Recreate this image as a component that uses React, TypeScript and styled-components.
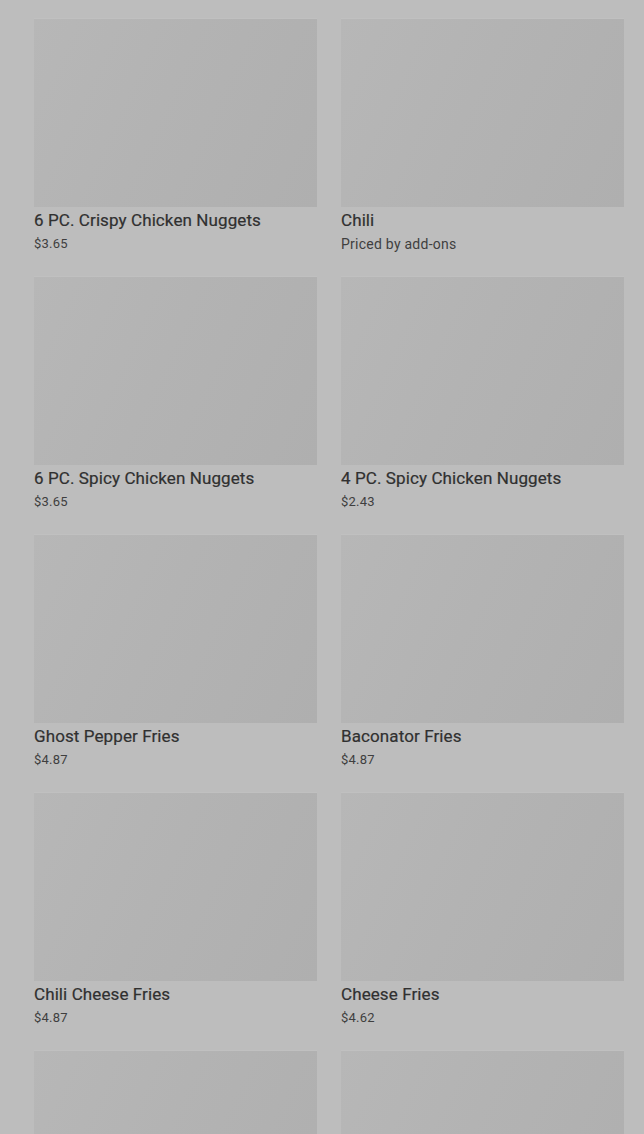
import * as React from 'react'
import styled, { createGlobalStyle } from 'styled-components'

type Item = { name?: string; price?: string }

const items: Item[] = [
  { name: '6 PC. Crispy Chicken Nuggets', price: '$3.65' },
  { name: 'Chili', price: 'Priced by add-ons' },
  { name: '6 PC. Spicy Chicken Nuggets', price: '$3.65' },
  { name: '4 PC. Spicy Chicken Nuggets', price: '$2.43' },
  { name: 'Ghost Pepper Fries', price: '$4.87' },
  { name: 'Baconator Fries', price: '$4.87' },
  { name: 'Chili Cheese Fries', price: '$4.87' },
  { name: 'Cheese Fries', price: '$4.62' },
  {},
  {},
]

export default function App() {
  return (
    <>
      <GlobalStyle />
      <Grid>
        {items.map((item, i) => (
          <Card key={i}>
            <Thumb />
            {item.name && <Title>{item.name}</Title>}
            {item.price && <Price $note={!item.price.startsWith('$')}>{item.price}</Price>}
          </Card>
        ))}
      </Grid>
    </>
  )
}

const GlobalStyle = createGlobalStyle`
  html, body {
    margin: 0;
    background: #bdbdbd;
    font-family: Roboto, 'Liberation Sans', sans-serif;
  }
`
const Grid = styled.div`
  display: grid;
  grid-template-columns: 283px 283px;
  column-gap: 24px;
  row-gap: 23px;
  padding: 19px 20px 0 34px;
`
const Card = styled.div`
  display: flex;
  flex-direction: column;
`
const Thumb = styled.div`
  height: 188px;
  background: linear-gradient(115deg, #b7b7b7 0%, #b3b3b3 45%, #afafaf 100%);
  box-shadow: 0 -1px 0 #c0c0c0;
`
const Title = styled.div`
  margin-top: 1px;
  font-size: 17px;
  line-height: 24px;
  font-weight: 400;
  letter-spacing: 0.1px;
  color: #303030;
  -webkit-text-stroke: 0.2px #303030;
`
const Price = styled.div<{ $note?: boolean }>`
  margin-top: 2px;
  font-size: ${p => (p.$note ? '14px' : '13px')};
  letter-spacing: ${p => (p.$note ? '0.25px' : '0.2px')};
  line-height: 20px;
  color: #3f3f3f;
`
